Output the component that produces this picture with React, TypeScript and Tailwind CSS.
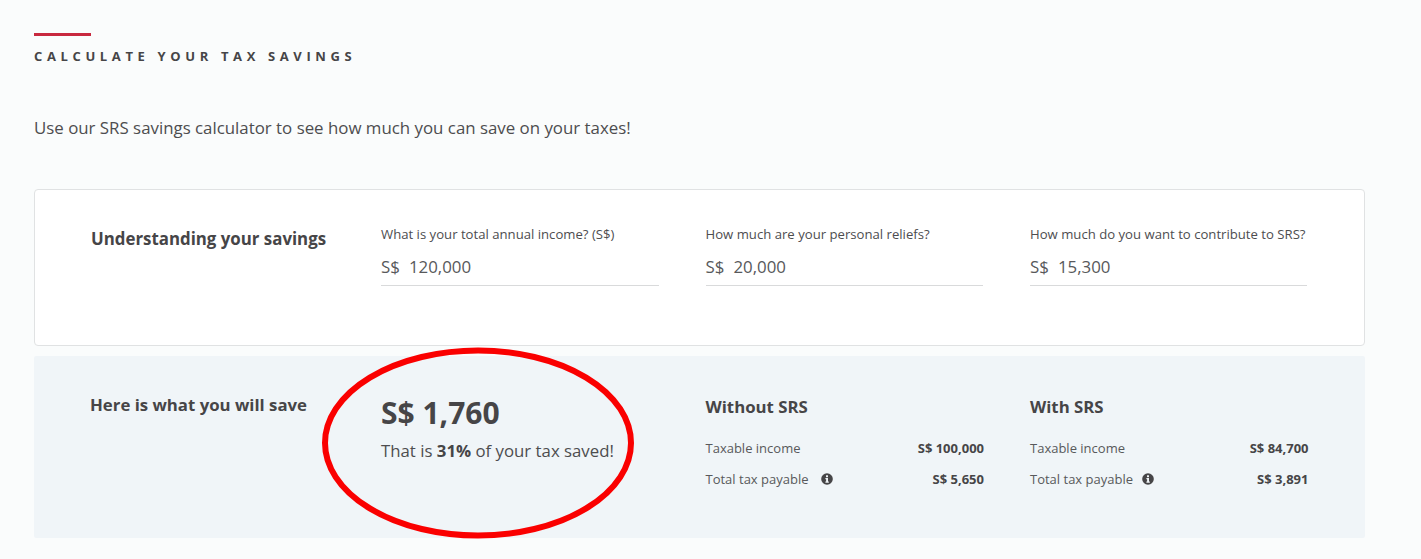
export default function App() {
  const inputs = [
    { label: 'What is your total annual income? (S$)', value: '120,000' },
    { label: 'How much are your personal reliefs?', value: '20,000' },
    { label: 'How much do you want to contribute to SRS?', value: '15,300' },
  ];

  const results = [
    { title: 'Without SRS', taxable: 'S$ 100,000', tax: 'S$ 5,650', iconGap: 'ml-[13px]' },
    { title: 'With SRS', taxable: 'S$ 84,700', tax: 'S$ 3,891', iconGap: 'ml-[9px]' },
  ];

  return (
    <div className="relative h-[559px] overflow-hidden bg-[#fafcfc] pl-[34px] pt-[33px] font-['Open_Sans',sans-serif] text-[#464547]">
      <div className="h-[3px] w-[57px] bg-[#c8293f]" />
      <h2 className="mt-[10px] text-[13px] leading-[20px] font-bold tracking-[4.63px] text-[#464547]">
        CALCULATE YOUR TAX SAVINGS
      </h2>
      <p className="mt-[50px] text-[16.85px] leading-[24px] text-[#4d4d4f]">
        Use our SRS savings calculator to see how much you can save on your taxes!
      </p>

      {/* Inputs */}
      <div className="mt-[49px] flex h-[157px] w-[1331px] rounded-[4px] border border-[#e0e2e3] bg-white pl-[56px] pt-[28px]">
        <h3 className="w-[290px] text-[16.85px] leading-[42px] font-bold">Understanding your savings</h3>
        <div className="grid grid-cols-[277.5px_277.5px_276.5px] gap-x-[47px]">
          {inputs.map((input) => (
            <div key={input.label}>
              <div className="pt-[6px] text-[13.15px] leading-[20px] text-[#4d4d4f]">{input.label}</div>
              <div className="mt-[11px] border-b border-[#d9dadb] pb-[6px] text-[16.85px] leading-[24px] text-[#58595b]">
                S$<span className="ml-[9px]">{input.value}</span>
              </div>
            </div>
          ))}
        </div>
      </div>

      {/* Results */}
      <div className="mt-[10px] flex h-[182px] w-[1331px] rounded-[2px] bg-[#f0f5f8] pl-[56px] pt-[32px]">
        <h3 className="w-[291px] text-[16.8px] leading-[34px] font-bold">Here is what you will save</h3>
        <div className="w-[324.5px]">
          <div className="mt-[3px] text-[30px] leading-[44px] font-bold">S$ 1,760</div>
          <div className="mt-[4px] text-[16.8px] leading-[24px] text-[#4d4d4f]">
            That is <b className="font-bold text-[#464547]">31%</b> of your tax saved!
          </div>
        </div>
        <div className="grid grid-cols-[278.5px_278.5px] gap-x-[46px]">
          {results.map((result) => (
            <div key={result.title}>
              <div className="mt-[5px] text-[16.8px] leading-[28px] font-bold">{result.title}</div>
              <div className="mt-[17px] flex justify-between text-[13px] leading-[20px]">
                <span className="text-[#58595b]">Taxable income</span>
                <b className="font-bold">{result.taxable}</b>
              </div>
              <div className="mt-[11px] flex justify-between text-[13px] leading-[20px]">
                <span className="flex items-center text-[#58595b]">
                  Total tax payable
                  <svg className={`${result.iconGap} h-[12px] w-[12px]`} viewBox="0 0 12 12">
                    <circle cx="6" cy="6" r="5.8" fill="#464547" />
                    <rect x="5" y="2.3" width="2" height="1.9" fill="#f0f5f8" />
                    <path d="M4.4 5.1H7V8.6H7.8V9.7H4.4V8.6H5.1V6.2H4.4Z" fill="#f0f5f8" />
                  </svg>
                </span>
                <b className="font-bold">{result.tax}</b>
              </div>
            </div>
          ))}
        </div>
      </div>

      {/* Hand drawn highlight */}
      <svg className="absolute left-[320px] top-[345px] h-[196px] w-[316px]" viewBox="0 0 316 196" fill="none">
        <ellipse cx="158" cy="98" rx="153" ry="92.5" stroke="#fa0000" strokeWidth="6" />
      </svg>
    </div>
  );
}
